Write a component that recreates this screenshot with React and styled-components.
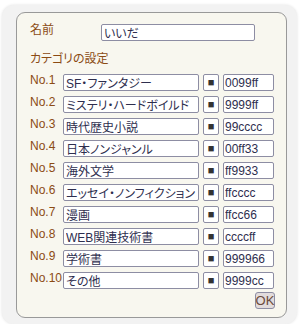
import React from "react";
import styled, { createGlobalStyle } from "styled-components";

const categories = [
	{ name: "SF・ファンタジー", color: "0099ff" },
	{ name: "ミステリ・ハードボイルド", color: "9999ff" },
	{ name: "時代歴史小説", color: "99cccc" },
	{ name: "日本ノンジャンル", color: "00ff33" },
	{ name: "海外文学", color: "ff9933" },
	{ name: "エッセイ・ノンフィクション", color: "ffcccc" },
	{ name: "漫画", color: "ffcc66" },
	{ name: "WEB関連技術書", color: "ccccff" },
	{ name: "学術書", color: "999966" },
	{ name: "その他", color: "9999cc" },
];

export default function App() {
	return (
		<>
			<GlobalStyle />
			<Frame>
				<Panel>
					<NameRow>
						<Label>名前</Label>
						<NameInput defaultValue="いいだ" />
					</NameRow>

					<SectionTitle>カテゴリの設定</SectionTitle>

					<CategoryList>
						{categories.map((cat, i) => (
							<Row key={i}>
								<Label>No.{i + 1}</Label>
								<TextInput defaultValue={cat.name} />
								<SwatchButton>■</SwatchButton>
								<HexInput defaultValue={cat.color} />
							</Row>
						))}
					</CategoryList>

					<Footer>
						<OkButton>OK</OkButton>
					</Footer>
				</Panel>
			</Frame>
		</>
	);
}

const GlobalStyle = createGlobalStyle`
	body {
		margin: 0;
		background: #ffffff;
		font-family: "Liberation Sans", "Noto Sans CJK JP", sans-serif;
		font-feature-settings: "palt";
	}
`

const Frame = styled.div`
	width: 295px;
	height: 319px;
	margin: 5px 0 0 2px;
	padding: 7px 10px 0 14px;
	box-sizing: border-box;
	background: #f2f2f2;
	border-radius: 12px;
	box-shadow: 0 0 3px rgba(0, 0, 0, 0.12);
`

const Panel = styled.div`
	width: 271px;
	height: 306px;
	box-sizing: border-box;
	padding: 11px 12px 0 13px;
	background: #f8f7ef;
	border: 1px solid #999999;
	border-radius: 9px;
`

const Label = styled.div`
	font-size: 12px;
	line-height: 13px;
	color: #8b4b14;
	white-space: nowrap;
`

const NameRow = styled.div`
	display: grid;
	grid-template-columns: 71px 154px;
	align-items: start;
`

const fieldBase = `
	box-sizing: border-box;
	height: 17px;
	margin: 0;
	padding: 0 2px;
	border: 1px solid #8d8da3;
	border-radius: 2px;
	background: #ffffff;
	color: #2e2e4e;
	font-family: "Liberation Sans", "Noto Sans CJK JP", sans-serif;
	font-feature-settings: "palt";
	font-size: 12px;
	outline: none;
`

const NameInput = styled.input`
	${fieldBase}
	width: 154px;
`

const SectionTitle = styled.div`
	margin-top: 10px;
	font-size: 12px;
	line-height: 17px;
	color: #8b4b14;
`

const CategoryList = styled.div`
	display: flex;
	flex-direction: column;
	gap: 5px;
	margin-top: 6px;
`

const Row = styled.div`
	display: grid;
	grid-template-columns: 29px 136px 16px 51px;
	column-gap: 4px;
	align-items: start;
`

const TextInput = styled.input`
	${fieldBase}
	width: 136px;
`

const SwatchButton = styled.div`
	box-sizing: border-box;
	width: 16px;
	height: 17px;
	display: flex;
	align-items: center;
	justify-content: center;
	border: 1px solid #8d8da3;
	border-radius: 2px;
	background: #ffffff;
	color: #333333;
	font-size: 11px;
	line-height: 1;
`

const HexInput = styled.input`
	${fieldBase}
	width: 51px;
	padding: 0 1px;
`

const Footer = styled.div`
	display: flex;
	justify-content: flex-end;
	width: 245px;
	margin-top: 3px;
`

const OkButton = styled.div`
	box-sizing: border-box;
	width: 20px;
	height: 17px;
	display: flex;
	align-items: center;
	justify-content: center;
	border: 1px solid #8d8da3;
	border-radius: 3px;
	background: #e2dcdc;
	color: #6b4a3a;
	font-size: 13px;
`
